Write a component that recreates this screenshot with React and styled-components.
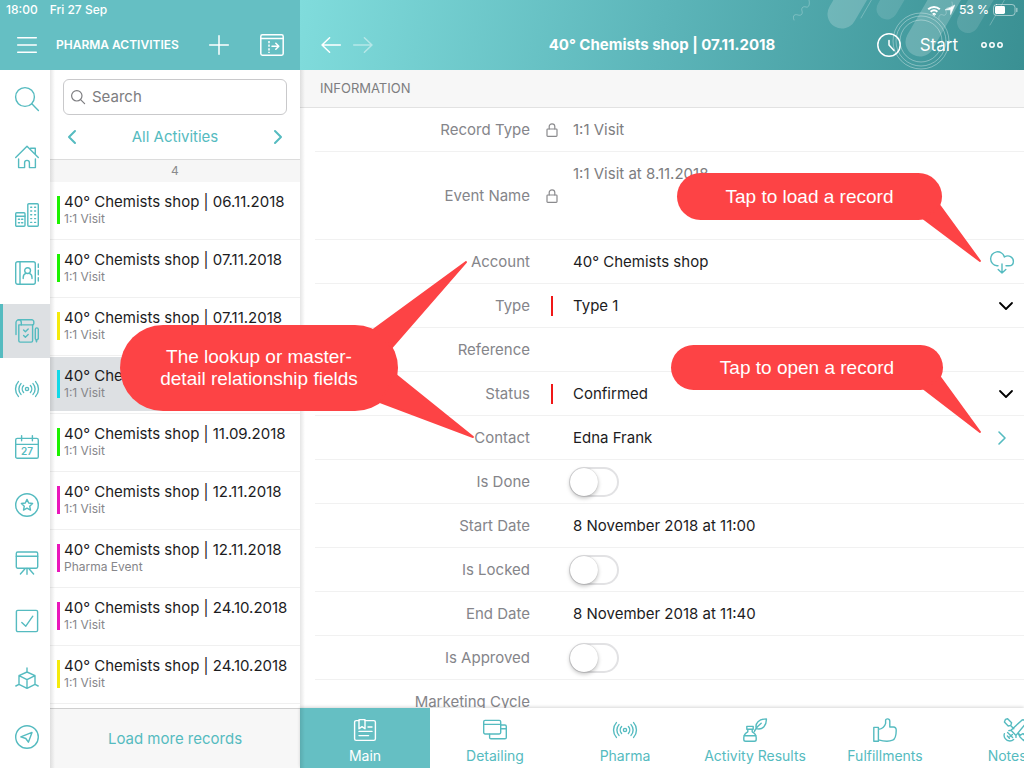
import React from "react";
import styled, { createGlobalStyle, css } from "styled-components";

const TEAL = "#55bbc0";
const TEAL_FILL = "#65bfc3";

const Global = createGlobalStyle`
  *, *::before, *::after { box-sizing: border-box; }
  html, body { margin: 0; height: 100%; }
  body {
    font-family: Inter, Roboto, "Liberation Sans", sans-serif;
    font-size: 15px;
    line-height: 20px;
    color: #1c1c1e;
    background: #fff;
  }
  button, input, select {
    font: inherit;
    color: inherit;
    margin: 0;
    padding: 0;
    border: 0;
    background: none;
    outline: none;
  }
  button { cursor: pointer; }
`;

const Screen = styled.div`
  position: relative;
  display: grid;
  grid-template-columns: 300px minmax(0, 1fr);
  grid-template-rows: 70px minmax(0, 1fr);
  height: 100vh;
  overflow: hidden;
`;

/* ---------- shared icon ---------- */

const Svg = styled.svg`
  display: block;
  flex: none;
  fill: none;
  stroke: currentColor;
  stroke-width: ${(p) => p.$stroke || 1.4};
  stroke-linecap: round;
  stroke-linejoin: round;
  overflow: visible;
`;

const Icon = ({ w = 24, h = 24, stroke, children }) => (
  <Svg width={w} height={h} viewBox={`0 0 ${w} ${h}`} $stroke={stroke} aria-hidden="true">
    {children}
  </Svg>
);

/* ---------- headers ---------- */

const headerBase = css`
  display: grid;
  grid-template-rows: 20px 50px;
  color: #fff;
`;

const ListHeader = styled.header`
  ${headerBase}
  background: ${TEAL_FILL};
`;

const RecordHeader = styled.header`
  ${headerBase}
  position: relative;
  overflow: hidden;
  background: linear-gradient(100deg, #80dcdc 0%, #5cb5b9 50%, #3a9093 100%);
`;

const StatusBar = styled.div`
  display: flex;
  align-items: center;
  justify-content: ${(p) => (p.$end ? "flex-end" : "flex-start")};
  gap: ${(p) => (p.$end ? 4 : 12)}px;
  padding: 0 6px;
  font-size: 12px;
  font-weight: 500;
  line-height: 20px;
  position: relative;
`;

const ListToolbar = styled.div`
  display: flex;
  align-items: center;
  padding: 0 16px 0 17px;
`;

const ListTitle = styled.h1`
  flex: 1;
  margin: 0 0 0 19px;
  font-size: 12px;
  font-weight: 600;
  line-height: 20px;
  white-space: nowrap;
`;

const IconButton = styled.button`
  display: flex;
  align-items: center;
  justify-content: center;
  color: ${(p) => p.$color || "inherit"};
  opacity: ${(p) => (p.disabled ? 0.45 : 1)};
`;

const ToolGroup = styled.div`
  display: flex;
  align-items: center;
  gap: ${(p) => p.$gap}px;
`;

const RecordToolbar = styled.div`
  position: relative;
  display: grid;
  grid-template-columns: 1fr auto 1fr;
  align-items: center;
  padding: 0 21px;
`;

const RecordTitle = styled.h2`
  margin: 0;
  font-size: 15px;
  font-weight: 700;
  line-height: 20px;
  white-space: nowrap;
`;

const RightTools = styled.div`
  display: flex;
  align-items: center;
  justify-content: flex-end;
  gap: 19px;
`;

const StartButton = styled.button`
  font-size: 17px;
  line-height: 20px;
  margin-right: 4px;
`;

const Decoration = styled.svg`
  position: absolute;
  top: 0;
  right: 0;
  fill: none;
  stroke: #fff;
  stroke-linecap: round;
`;

/* ---------- body ---------- */

const SidePane = styled.div`
  display: grid;
  grid-template-columns: 50px minmax(0, 1fr);
  min-height: 0;
`;

const Rail = styled.nav`
  display: flex;
  flex-direction: column;
  overflow: hidden;
`;

const RailItem = styled.button`
  flex: none;
  display: flex;
  align-items: center;
  justify-content: center;
  height: 54px;
  margin: 2px 0;
  color: ${TEAL};
  border-left: 3px solid ${(p) => (p.$active ? TEAL : "transparent")};
  background: ${(p) => (p.$active ? "#dde0e3" : "transparent")};
`;

const edgeShade = css`
  position: relative;
  &::after {
    content: "";
    position: absolute;
    top: 0;
    bottom: 0;
    left: 0;
    width: 5px;
    background: linear-gradient(90deg, rgba(0, 0, 0, 0.1), rgba(0, 0, 0, 0));
    pointer-events: none;
  }
`;

const ListPane = styled.section`
  ${edgeShade}
  display: flex;
  flex-direction: column;
  min-height: 0;
`;

const SearchBox = styled.label`
  flex: none;
  display: flex;
  align-items: center;
  gap: 7px;
  height: 36px;
  margin: 9px 13px 0;
  padding: 0 7px;
  border: 1px solid #c9c9cb;
  border-radius: 6px;
  color: #7d7d80;
`;

const SearchInput = styled.input`
  flex: 1;
  min-width: 0;
  &::placeholder { color: #7d7d80; opacity: 1; }
`;

const FilterBar = styled.div`
  flex: none;
  display: flex;
  align-items: center;
  justify-content: space-between;
  height: 44px;
  padding: 0 17px;
  color: ${TEAL};
`;

const FilterName = styled.button`
  line-height: 20px;
`;

const CountBar = styled.div`
  flex: none;
  height: 23px;
  border-top: 1px solid #dcdcdc;
  background: #f6f6f6;
  color: #8a8a8d;
  font-size: 12px;
  line-height: 22px;
  text-align: center;
`;

const RecordList = styled.ul`
  flex: 1;
  min-height: 0;
  margin: 0;
  padding: 0;
  list-style: none;
  overflow: hidden;
`;

const RecordItem = styled.li`
  height: 58px;
  padding: 1px 0 2px;
  border-bottom: 1px solid #f0f0f0;
`;

const RecordLink = styled.a`
  display: flex;
  align-items: center;
  gap: 4px;
  height: 54px;
  padding-left: 7px;
  color: inherit;
  text-decoration: none;
  background: ${(p) => (p.$selected ? "#dde0e3" : "transparent")};
`;

const ColorMark = styled.span`
  width: 3px;
  height: 28px;
  background: ${(p) => p.$color};
`;

const RecordText = styled.span`
  display: flex;
  flex-direction: column;
  white-space: nowrap;
`;

const RecordName = styled.span`
  font-size: 15px;
  line-height: 18px;
`;

const RecordKind = styled.span`
  font-size: 12px;
  line-height: 16px;
  color: #86868a;
`;

const LoadMore = styled.button`
  flex: none;
  height: 60px;
  border-top: 1px solid #cfcfcf;
  background: #f7f7f7;
  color: ${TEAL};
`;

const RecordPane = styled.main`
  ${edgeShade}
  display: flex;
  flex-direction: column;
  min-height: 0;
`;

const SectionTitle = styled.h3`
  flex: none;
  margin: 0;
  height: 38px;
  padding: 0 20px;
  border-bottom: 1px solid #e2e2e2;
  background: #f7f7f7;
  color: #7d7d80;
  font-size: 13px;
  font-weight: 400;
  line-height: 37px;
`;

const Fields = styled.form`
  flex: 1;
  min-height: 0;
  padding-left: 15px;
  overflow: hidden;
`;

const FieldRow = styled.div`
  display: grid;
  grid-template-columns: 215px 43px minmax(0, 1fr) auto;
  align-items: center;
  height: ${(p) => (p.$tall ? 88 : 44)}px;
  padding-right: 10px;
  border-bottom: 1px solid #f1f1f1;
`;

const FieldLabel = styled.label`
  color: #85858a;
  text-align: right;
`;

const Marker = styled.span`
  display: flex;
  justify-content: center;
  color: #8a8a8d;
`;

const RequiredBar = styled.span`
  width: 2px;
  height: 20px;
  background: #f01818;
`;

const LockedValue = styled.output`
  color: #7d7d80;
  align-self: ${(p) => (p.$tall ? "start" : "center")};
  padding-top: ${(p) => (p.$tall ? 12 : 0)}px;
`;

const TextValue = styled.input`
  width: 100%;
`;

const SelectValue = styled.select`
  width: 100%;
  appearance: none;
`;

const Toggle = styled.input`
  appearance: none;
  position: relative;
  justify-self: start;
  width: 50px;
  height: 30px;
  margin-left: -4px;
  border: 2px solid #e2e2e4;
  border-radius: 15px;
  background: #fff;
  &::before {
    content: "";
    position: absolute;
    left: -1px;
    top: -1px;
    width: 28px;
    height: 28px;
    border-radius: 50%;
    background: #fff;
    box-shadow: 0 2px 4px rgba(0, 0, 0, 0.25), 0 0 1px rgba(0, 0, 0, 0.25);
  }
`;

const TabBar = styled.nav`
  display: flex;
  height: 60px;
  overflow: hidden;
  background: #fff;
`;

const TabShade = styled.div`
  position: relative;
  flex: none;
  box-shadow: 0 -1px 3px rgba(0, 0, 0, 0.16);
`;

const Tab = styled.button`
  flex: none;
  display: flex;
  flex-direction: column;
  align-items: center;
  gap: 4px;
  width: 130px;
  padding-top: 10px;
  line-height: 20px;
  font-size: 14px;
  white-space: nowrap;
  color: ${(p) => (p.$active ? "#fff" : TEAL)};
  background: ${(p) => (p.$active ? TEAL_FILL : "transparent")};
`;

/* ---------- callouts ---------- */

const CalloutBox = styled.aside`
  position: absolute;
  top: ${(p) => p.$top}px;
  ${(p) => (p.$right !== undefined ? `right: ${p.$right}px;` : `left: ${p.$left}px;`)}
  width: ${(p) => p.$w}px;
  height: ${(p) => p.$h}px;
  display: flex;
  align-items: center;
  justify-content: center;
  border-radius: 43px;
  background: #fd4345;
  color: #fff;
  font-family: "Liberation Sans", sans-serif;
  font-size: 19px;
  line-height: 22px;
  text-align: center;
  pointer-events: none;
`;

const Tail = styled.svg`
  position: absolute;
  inset: 0;
  overflow: visible;
  fill: #fd4345;
  stroke: #fd4345;
  stroke-width: 2;
  stroke-linejoin: round;
`;

const CalloutText = styled.span`
  position: relative;
`;

const Callout = ({ tails, children, ...box }) => (
  <CalloutBox {...box}>
    <Tail width={box.$w} height={box.$h} aria-hidden="true">
      {tails.map((t) => <polygon key={t} points={t} />)}
    </Tail>
    <CalloutText>{children}</CalloutText>
  </CalloutBox>
);

/* ---------- drawings ---------- */

const Broadcast = () => (
  <>
    <circle cx="12" cy="12" r="1.6" />
    <path d="M8.6 8.6a5 5 0 0 0 0 6.8M15.4 8.6a5 5 0 0 1 0 6.8M6 6.6a8 8 0 0 0 0 10.8M18 6.6a8 8 0 0 1 0 10.8M3.4 4.6a11 11 0 0 0 0 14.8M20.6 4.6a11 11 0 0 1 0 14.8" />
  </>
);

const railIcons = {
  Search: <><circle cx="10" cy="10" r="9.4" /><path d="M16.8 16.8l6.6 6.6" /></>,
  Home: (
    <path d="M.7 12.6L12 1.3l11.3 11.3M15.6 3.3h4.7v5.6M3.6 14v8.6h6v-4.8a2.4 2.4 0 0 1 4.8 0v4.8h6V14" />
  ),
  Accounts: (
    <>
      <rect x=".7" y="9.7" width="9.3" height="13.6" rx="1" />
      <rect x="12.8" y=".7" width="10.5" height="22.6" rx="1" />
      <path d="M.7 13.2H10" />
      <path d="M3.4 16.3h1.2M6.6 16.3h1.2M3.4 19.8h1.2M6.6 19.8h1.2M15.7 4.2h1M19.6 4.2h1M15.7 8h1M19.6 8h1M15.7 11.8h1M19.6 11.8h1M15.7 15.6h1M19.6 15.6h1M15.7 19.4h1M19.6 19.4h1" />
    </>
  ),
  Contacts: (
    <>
      <rect x=".7" y=".7" width="19.6" height="22.6" rx="2" />
      <path d="M5 .7v22.6M23.3 3v3.4M23.3 9.3v4.4M23.3 16.6V20" />
      <circle cx="12.6" cy="9.6" r="2.9" />
      <path d="M8.2 17.6v-1.2a4.4 4.4 0 0 1 2.6-4M17 17.6v-1.2a4.4 4.4 0 0 0-2.6-4" />
    </>
  ),
  Activities: (
    <>
      <path d="M1 15.6V3.6A2.8 2.8 0 0 1 3.8.8h13a2 2 0 0 1 2 2v1.6a1.5 1.5 0 0 1-1.5 1.5H6.3V3.4A2.6 2.6 0 0 0 3.7.8" />
      <path d="M3.8 5.9v15.8a1.4 1.4 0 0 0 1.4 1.4h11a1.4 1.4 0 0 0 1.4-1.4V5.9M3.8 5.9h2.5" />
      <path d="M8.6 11l1.8 1.8 2.8-2.8M8.600 16.400l1.800 1.800 2.800-2.800M22 20.600l-.5 2.200-.6-2.200-.6-.8v-9.400a1.500 1.500 0 0 1 3 0v9.400z" />
    </>
  ),
  Broadcast: <Broadcast />,
  Calendar: (
    <>
      <rect x=".7" y="3.4" width="22.6" height="19.9" rx="1.6" />
      <path d="M.7 9.4h22.6M6.6.6v5.2M17.4.6v5.2" />
      <text x="12" y="20" textAnchor="middle" fontSize="10" fontWeight="600" fill="currentColor" stroke="none">27</text>
    </>
  ),
  Favourites: (
    <>
      <circle cx="12" cy="12" r="11.3" />
      <path d="M12 6.4l1.7 3.6 3.9.5-2.9 2.7.8 3.9-3.5-2-3.5 2 .8-3.9-2.9-2.7 3.9-.5z" />
    </>
  ),
  Presentations: (
    <>
      <rect x="1.3" y="1" width="21.4" height="16.2" rx="1.4" />
      <path d="M1.3 5.2h21.4M12 17.4v5.8M9.8 18l-4.4 5M14.2 18l4.4 5" />
    </>
  ),
  Tasks: <><rect x="1.4" y="1.4" width="21.2" height="21.2" rx="1.4" /><path d="M6.8 13.4l4 3.8 7-10" /></>,
  Products: (
    <path d="M12 1v4M12 5l8 3.600v8.800L12 21.400l-8-4V8.600zM4 8.600l8 4 8-4M12 12.600v8.800M4 17.400L.8 19M20 17.400l3.200 1.600" />
  ),
  Nearby: (
    <><circle cx="12" cy="12" r="11.3" /><path d="M17 7.400l-3.600 9.800-2.600-3.700-5-1.600z" /></>
  ),
};

const tabIcons = {
  Main: (
    <>
      <path d="M6 2.6H3.2A1.6 1.6 0 0 0 1.6 4.2v16.6a1.6 1.6 0 0 0 1.6 1.6h17.6a1.6 1.6 0 0 0 1.6-1.6V4.2a1.6 1.6 0 0 0-1.6-1.6H12" />
      <path d="M6 1.6h6v9.2L9 8.6l-3 2.2zM15 9h4M6 13.4h13M6 17.6h9.6" />
    </>
  ),
  Detailing: (
    <>
      <rect x=".7" y="2.4" width="17" height="13.6" rx="1.4" />
      <path d="M.7 6.4h17M17.8 7h4.1a1.4 1.4 0 0 1 1.4 1.4v11a1.4 1.4 0 0 1-1.4 1.4H8a1.4 1.4 0 0 1-1.4-1.4V16.2M17.8 10.8h5.4" />
    </>
  ),
  Pharma: <Broadcast />,
  "Activity Results": (
    <path d="M3.8 8.4h6.4v2.8H3.800zM4.800 11.200v2.600c-2.200 1.200-4 3.400-4 6v1.600c0 1 .8 1.800 1.800 1.800h8.800c1 0 1.800-.8 1.800-1.800v-1.600c0-2.600-1.800-4.800-4-6v-2.600M.9 17.800h12.200M11.400 13.400c.6-1.400 1.600-3 3-4.600M13.300 10.600C11.800 5 16 1 23.400.9c.2 6-3.400 11.600-10.100 9.700zM14.400 8.800l3.800-3.600" />
  ),
  Fulfillments: (
    <path d="M.8 9.400h4.600v13.800H.8zM5.400 11.400c3.400-.4 6.400-3 7.200-6V2.600c0-2.400 4-2.400 4.200.4V9h3.600c2 0 2.900 1.600 2.800 3.400 0 5-1 8.600-3.600 9.800-3 1.200-9.400 1-14.200-.4" />
  ),
  "Notes\u00a0\u00a0\u00a0\u00a0": (
    <path d="M2.400 1.400l2.200-.6L8.600 4.800 7.800 7.400 5.200 8 1.400 4zM7.600 7.600l3.200 3.200M13 17.400L8 12.200 18.600 2.400c2-1.600 5.200 1 3.800 3.400zM8 12.200l-2.200.4M13 17.400v2M15 15l2.400 2.200 2.600-1.600 3.600 3.600-3 3.400-3.600-3.600zM1.400 15.600c-1.200 3.600 1.600 7.400 5.400 7.400 1.600 0 2.800-.4 3.800-1.400M4.600 14.600l5 5M7 18.600l2.400-2.200M4.400 18l2 2.200" />
  ),
};

const LockIcon = () => (
  <Icon w={12} h={14} stroke={1.2}>
    <rect x="1" y="6" width="10" height="7.400" rx=".8" />
    <path d="M3.200 6V3.600a2.800 2.800 0 0 1 5.600 0V6" />
  </Icon>
);

const ChevronDown = styled.span`
  display: flex;
  color: #000;
  pointer-events: none;
`;

/* ---------- data ---------- */

const records = [
  ["06.11.2018", "1:1 Visit", "#1df200"],
  ["07.11.2018", "1:1 Visit", "#1df200"],
  ["07.11.2018", "1:1 Visit", "#f5ea0c"],
  ["07.11.2018", "1:1 Visit", "#12d9e8", true],
  ["11.09.2018", "1:1 Visit", "#1df200"],
  ["12.11.2018", "1:1 Visit", "#ea17bb"],
  ["12.11.2018", "Pharma Event", "#ea17bb"],
  ["24.10.2018", "1:1 Visit", "#ea17bb"],
  ["24.10.2018", "1:1 Visit", "#f5ea0c"],
];

const fields = [
  { label: "Record Type", kind: "locked", value: "1:1 Visit" },
  { label: "Event Name", kind: "locked", value: "1:1 Visit at 8.11.2018", tall: true },
  { label: "Account", kind: "text", value: "40° Chemists shop", action: "load" },
  { label: "Type", kind: "select", value: "Type 1" },
  { label: "Reference", kind: "text", value: "" },
  { label: "Status", kind: "select", value: "Confirmed" },
  { label: "Contact", kind: "text", value: "Edna Frank", action: "open" },
  { label: "Is Done", kind: "toggle" },
  { label: "Start Date", kind: "text", value: "8 November 2018 at 11:00" },
  { label: "Is Locked", kind: "toggle" },
  { label: "End Date", kind: "text", value: "8 November 2018 at 11:40" },
  { label: "Is Approved", kind: "toggle" },
  { label: "Marketing Cycle", kind: "text", value: "" },
];

const Field = ({ label, kind, value, tall, action }) => {
  const id = label.toLowerCase().replace(/ /g, "-");
  return (
    <FieldRow $tall={tall}>
      <FieldLabel htmlFor={id}>{label}</FieldLabel>
      <Marker>
        {kind === "locked" && <LockIcon />}
        {kind === "select" && <RequiredBar />}
      </Marker>
      {kind === "locked" && <LockedValue id={id} $tall={tall}>{value}</LockedValue>}
      {kind === "text" && <TextValue id={id} type="text" defaultValue={value} />}
      {kind === "select" && (
        <SelectValue id={id} defaultValue={value}><option>{value}</option></SelectValue>
      )}
      {kind === "toggle" && <Toggle id={id} type="checkbox" role="switch" />}
      {kind === "select" && (
        <ChevronDown>
          <Icon w={16} h={10} stroke={1.8}><path d="M2 2l6 6 6-6" /></Icon>
        </ChevronDown>
      )}
      {action === "load" && (
        <IconButton type="button" aria-label="Load record" $color={TEAL}>
          <Icon stroke={1.4}>
            <path d="M8 15.800H7A7 7 0 1 1 14.400 7c4.400-2.800 9 .2 9 4.200 0 2.800-2 4.600-4.600 4.600H16M12 14v9M8.200 19.400L12 23l3.800-3.600" />
          </Icon>
        </IconButton>
      )}
      {action === "open" && (
        <IconButton type="button" aria-label="Open record" $color={TEAL}>
          <Icon w={24} h={14} stroke={1.6}><path d="M9 1l6 6-6 6" /></Icon>
        </IconButton>
      )}
    </FieldRow>
  );
};

export default function App() {
  return (
    <>
      <Global />
      <Screen>
        <ListHeader>
          <StatusBar><span>18:00</span><span>Fri 27 Sep</span></StatusBar>
          <ListToolbar>
            <IconButton aria-label="Menu">
              <Icon w={20} h={16} stroke={1.5}><path d="M.7.7h18.600M.7 8h18.600M.7 15.300h18.600" /></Icon>
            </IconButton>
            <ListTitle>PHARMA ACTIVITIES</ListTitle>
            <ToolGroup $gap={31}>
              <IconButton aria-label="New activity">
                <Icon w={20} h={20} stroke={1.5}><path d="M.7 10h18.600M10 .7v18.600" /></Icon>
              </IconButton>
              <IconButton aria-label="Expand panel">
                <Icon w={24} h={22} stroke={1.5}>
                  <rect x=".8" y=".8" width="22.400" height="20.400" rx="1.600" />
                  <path d="M.8 4.600h22.400M12 12.200h6.600M15.800 9.200l3 3-3 3" />
                  <path d="M9 7v12" strokeDasharray="2.200 1.400" strokeLinecap="butt" />
                </Icon>
              </IconButton>
            </ToolGroup>
          </ListToolbar>
        </ListHeader>

        <RecordHeader>
          <Decoration width="264" height="70" viewBox="0 0 264 70" aria-hidden="true">
            <g strokeOpacity="0.200">
              <path d="M82 14l24-41M160 42l30-52" strokeWidth="29" />
            </g>
            <g strokeOpacity="0.120">
              <path d="M127 9l20-34" strokeWidth="21" />
              <path d="M208 22l24-41" strokeWidth="22" />
            </g>
            <g strokeOpacity="0.250">
              <path d="M101 18l11-19M230 25l15-26" />
              <path d="M34 20c-2-5 1-6 4-5s5-1 4-4 1-5 4-4 4-3 3-7M179 19c-1-4 2-5 4-4s4-1 3-4 2-4 4-3 3-3 2-6" />
            </g>
            <g strokeOpacity="0.350">
              <circle cx="161" cy="41" r="28" />
              <circle cx="161" cy="41" r="25" />
              <circle cx="161" cy="41" r="21" />
            </g>
          </Decoration>
          <StatusBar $end>
            <Icon w={14} h={11} stroke={2}>
              <path d="M1.200 4.200a8.600 8.600 0 0 1 11.600 0M3.600 6.800a5.200 5.200 0 0 1 6.800 0" strokeLinecap="butt" />
              <path d="M7 10.200L5.600 8.800a2 2 0 0 1 2.800 0z" strokeWidth="1" fill="currentColor" />
            </Icon>
            <Icon w={10} h={10} stroke={0.6}>
              <path d="M9.600.4L5.600 9.600V4.800H.6z" fill="currentColor" />
            </Icon>
            <span>53 %</span>
            <Icon w={25} h={12} stroke={1}>
              <rect x=".5" y=".5" width="21.500" height="11" rx="3" strokeOpacity="0.500" />
              <rect x="2" y="2" width="10" height="8" rx="1.400" fill="currentColor" stroke="none" />
              <path d="M23.800 4.500v3" strokeWidth="1.400" strokeOpacity="0.500" />
            </Icon>
          </StatusBar>
          <RecordToolbar>
            <ToolGroup $gap={12}>
              <IconButton aria-label="Back">
                <Icon w={20} h={16} stroke={1.5}><path d="M19.300 8H1M8.600.7L1 8l7.600 7.300" /></Icon>
              </IconButton>
              <IconButton aria-label="Forward" disabled>
                <Icon w={20} h={16} stroke={1.5}><path d="M.7 8H19M11.400.7L19 8l-7.600 7.300" /></Icon>
              </IconButton>
            </ToolGroup>
            <RecordTitle>40° Chemists shop | 07.11.2018</RecordTitle>
            <RightTools>
              <IconButton aria-label="History">
                <Icon stroke={1.5}><circle cx="12" cy="12" r="11.200" /><path d="M12 7.400V12l5 5.400" /></Icon>
              </IconButton>
              <StartButton>Start</StartButton>
              <IconButton aria-label="More">
                <Icon w={22} h={6} stroke={1.5}>
                  <circle cx="3" cy="3" r="2.200" /><circle cx="11" cy="3" r="2.200" /><circle cx="19" cy="3" r="2.200" />
                </Icon>
              </IconButton>
            </RightTools>
          </RecordToolbar>
        </RecordHeader>

        <SidePane>
          <Rail aria-label="Sections">
            {Object.entries(railIcons).map(([name, art]) => (
              <RailItem key={name} aria-label={name} $active={name === "Activities"}>
                <Icon>{art}</Icon>
              </RailItem>
            ))}
          </Rail>
          <ListPane>
            <SearchBox>
              <Icon w={14} h={14} stroke={1.2}><circle cx="5.800" cy="5.800" r="5.200" /><path d="M9.600 9.600l4 4" /></Icon>
              <SearchInput type="search" placeholder="Search" aria-label="Search" />
            </SearchBox>
            <FilterBar>
              <IconButton aria-label="Previous filter">
                <Icon w={10} h={14} stroke={2}><path d="M8 1L2 7l6 6" /></Icon>
              </IconButton>
              <FilterName>All Activities</FilterName>
              <IconButton aria-label="Next filter">
                <Icon w={10} h={14} stroke={2}><path d="M2 1l6 6-6 6" /></Icon>
              </IconButton>
            </FilterBar>
            <CountBar>4</CountBar>
            <RecordList>
              {records.map(([date, kind, color, selected], i) => (
                <RecordItem key={i}>
                  <RecordLink href="#" $selected={selected}>
                    <ColorMark $color={color} />
                    <RecordText>
                      <RecordName>40° Chemists shop | {date}</RecordName>
                      <RecordKind>{kind}</RecordKind>
                    </RecordText>
                  </RecordLink>
                </RecordItem>
              ))}
            </RecordList>
            <LoadMore>Load more records</LoadMore>
          </ListPane>
        </SidePane>

        <RecordPane>
          <SectionTitle>INFORMATION</SectionTitle>
          <Fields>
            {fields.map((f) => <Field key={f.label} {...f} />)}
          </Fields>
          <TabShade>
            <TabBar aria-label="Record tabs">
              {Object.entries(tabIcons).map(([name, art]) => (
                <Tab key={name} $active={name === "Main"}>
                  <Icon>{art}</Icon>
                  {name}
                </Tab>
              ))}
            </TabBar>
          </TabShade>
        </RecordPane>

        <Callout $top={173} $right={82} $w={265} $h={47} tails={["263,33 247,46 303,88"]}>
          Tap to load a record
        </Callout>
        <Callout $top={345} $right={81} $w={272} $h={45} tails={["269,32 253,44 309,87"]}>
          Tap to open a record
        </Callout>
        <Callout
          $top={325}
          $left={120}
          $w={278}
          $h={86}
          tails={["253,5 346,-63 272,22", "276,50 260,77 353,112"]}
        >
          The lookup or master-<br />detail relationship fields
        </Callout>
      </Screen>
    </>
  );
}
